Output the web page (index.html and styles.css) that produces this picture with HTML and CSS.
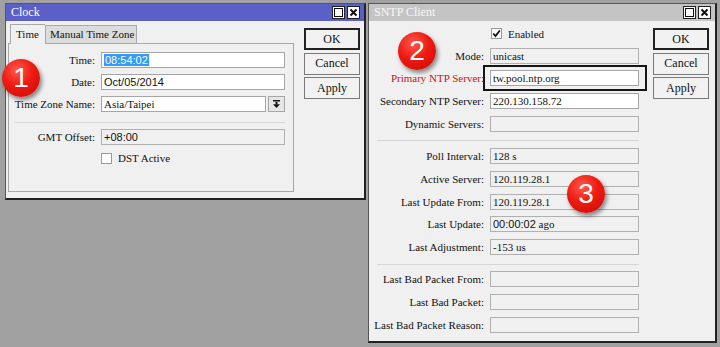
FILE: index.html
```html
<!DOCTYPE html>
<html>
<head>
<meta charset="utf-8">
<link rel="stylesheet" href="styles.css">
</head>
<body>
<div class="desk">
  <div class="win clock">
    <div class="title active">
      <span>Clock</span>
      <div class="tbtns">
        <span class="tb"><svg width="9" height="9" viewBox="0 0 9 9"><rect x="0.5" y="0.5" width="8" height="8" fill="none" stroke="#111"/></svg></span>
        <span class="tb"><svg width="9" height="9" viewBox="0 0 9 9"><path d="M1.5 1.5L7.5 7.5M7.5 1.5L1.5 7.5" stroke="#111" stroke-width="2"/></svg></span>
      </div>
    </div>
    <div class="wbody">
      <div class="tabs-area">
        <div class="tabstrip">
          <div class="tab on">Time</div>
          <div class="tab">Manual Time Zone</div>
        </div>
        <div class="panel">
          <div class="row"><label>Time:</label><div class="field sans"><span class="sel">08:54:02</span></div></div>
          <div class="row"><label>Date:</label><div class="field sans">Oct/05/2014</div></div>
          <div class="row"><label>Time Zone Name:</label><div class="field combo">Asia/Taipei</div><div class="dd"><svg width="7" height="8" viewBox="0 0 7 8"><rect x="0" y="0" width="7" height="1.5" fill="#111"/><rect x="2.5" y="2" width="2" height="2.5" fill="#111"/><path d="M0 4.3H7L3.5 8Z" fill="#111"/></svg></div></div>
          <div class="sep csep"></div>
          <div class="row"><label>GMT Offset:</label><div class="field ro sans">+08:00</div></div>
          <div class="row chkrow"><span class="cb"></span><span class="cbl">DST Active</span></div>
        </div>
      </div>
      <div class="btns">
        <div class="btn def">OK</div>
        <div class="btn">Cancel</div>
        <div class="btn">Apply</div>
      </div>
    </div>
  </div>

  <div class="win sntp">
    <div class="title inactive">
      <span>SNTP Client</span>
      <div class="tbtns">
        <span class="tb"><svg width="9" height="9" viewBox="0 0 9 9"><rect x="0.5" y="0.5" width="8" height="8" fill="none" stroke="#111"/></svg></span>
        <span class="tb"><svg width="9" height="9" viewBox="0 0 9 9"><path d="M1.5 1.5L7.5 7.5M7.5 1.5L1.5 7.5" stroke="#111" stroke-width="2"/></svg></span>
      </div>
    </div>
    <div class="wbody sbody">
      <div class="sform">
        <div class="row en"><label></label><span class="cb"><svg width="9" height="9" viewBox="0 0 9 9"><path d="M1.2 4.5L3.5 7L7.8 1.5" fill="none" stroke="#111" stroke-width="1.8"/></svg></span><span class="cbl">Enabled</span></div>
        <div class="row"><label>Mode:</label><div class="field ro">unicast</div></div>
        <div class="row"><label class="red">Primary NTP Server:</label><div class="field">tw.pool.ntp.org</div></div>
        <div class="row"><label>Secondary NTP Server:</label><div class="field">220.130.158.72</div></div>
        <div class="row"><label>Dynamic Servers:</label><div class="field ro"></div></div>
        <div class="sep ssep"></div>
        <div class="row"><label>Poll Interval:</label><div class="field ro">128 s</div></div>
        <div class="row"><label>Active Server:</label><div class="field ro">120.119.28.1</div></div>
        <div class="row"><label>Last Update From:</label><div class="field ro">120.119.28.1</div></div>
        <div class="row"><label>Last Update:</label><div class="field ro"><span class="sans">00:00:02</span>&nbsp;ago</div></div>
        <div class="row"><label>Last Adjustment:</label><div class="field ro">-153 us</div></div>
        <div class="sep ssep"></div>
        <div class="row"><label>Last Bad Packet From:</label><div class="field ro"></div></div>
        <div class="row"><label>Last Bad Packet:</label><div class="field ro"></div></div>
        <div class="row"><label>Last Bad Packet Reason:</label><div class="field ro"></div></div>
      </div>
      <div class="btns">
        <div class="btn def">OK</div>
        <div class="btn">Cancel</div>
        <div class="btn">Apply</div>
      </div>
    </div>
  </div>
</div>

<div class="hilite"></div>
<div class="badge b1">1</div>
<div class="badge b2">2</div>
<div class="badge b3">3</div>
</body>
</html>
```

FILE: styles.css
```css
* { box-sizing: border-box; }
html, body { margin: 0; height: 100%; }
body {
  background: #a1a1a1;
  font-family: "Liberation Serif", "Times New Roman", serif;
  font-size: 11px;
  color: #111;
  position: relative;
  overflow: hidden;
}
.desk { display: flex; gap: 2px; padding: 3px 0 0 5px; align-items: flex-start; }
.win {
  background: #f0f0f0;
  border: 1px solid #555;
  border-right: 2px solid #222;
  border-bottom: 2px solid #222;
  display: flex;
  flex-direction: column;
}
.clock { width: 361px; height: 197px; }
.sntp { width: 349px; height: 340px; }

.title {
  height: 17px;
  flex: none;
  display: flex;
  align-items: center;
  justify-content: space-between;
  padding: 0 4px 0 5px;
  font-size: 12px;
}
.title.active { background: #5b5fc8; color: #fff; }
.title.inactive { background: #c4c4c4; color: #f7f7f7; }
.tbtns { display: flex; gap: 2px; }
.tb {
  width: 13px; height: 13px;
  background: #fff;
  border: 1px solid #222;
  display: flex; align-items: center; justify-content: center;
}

.wbody { display: flex; padding: 3px 0 0 2px; }
.tabs-area { width: 286px; display: flex; flex-direction: column; }
.tabstrip { height: 19px; display: flex; align-items: flex-end; padding-left: 2px; }
.tab {
  height: 18px;
  border: 1px solid #a8a8a8;
  border-bottom: none;
  background: #dcdcdc;
  padding: 2px 4px 0 4px;
  white-space: nowrap;
}
.tab.on {
  height: 20px;
  width: 35px;
  background: #f0f0f0;
  position: relative;
  margin-bottom: -1px;
  z-index: 1;
  padding: 3px 0 0 5px;
  border-right: none;
}
.tab.on + .tab { width: 92px; }
.panel {
  height: 149px;
  border: 1px solid #a8a8a8;
  padding: 8px 0 0 0;
  display: flex;
  flex-direction: column;
  gap: 6px;
}

.row { display: flex; align-items: center; height: 16px; flex: none; }
.row label { width: 86px; margin-right: 6px; text-align: right; white-space: nowrap; }
.field {
  width: 184px;
  height: 16px;
  border: 1px solid #a6a6a6;
  background: #fff;
  padding: 0 0 0 2px;
  line-height: 14px;
  white-space: nowrap;
  overflow: hidden;
}
.field.ro { background: #f0f0f0; border-color: #b0b0b0; }
.field.combo { width: 165px; }
.sans { font-family: "Liberation Sans", Arial, sans-serif; font-size: 11px; }
.sel { background: #3399ff; color: #fff; padding: 0 1px; }
.dd {
  width: 17px; height: 16px;
  margin-left: 2px;
  border: 1px solid #a6a6a6;
  background: #e6e6e6;
  display: flex; align-items: center; justify-content: center;
}
.sep { flex: none; border-bottom: 1px solid #d6d6d6; }
.csep { height: 5px; margin-left: 6px; width: 270px; }
.chkrow { height: 14px; padding-left: 92px; }
.cb {
  width: 11px; height: 11px;
  border: 1px solid #9a9a9a;
  background: #fff;
  display: inline-flex; align-items: center; justify-content: center;
  flex: none;
}
.cbl { margin-left: 6px; }

.btns { display: flex; flex-direction: column; gap: 2.5px; padding-top: 4px; margin-left: 10px; width: 56px; }
.btn {
  height: 22px;
  border: 1px solid #7a7a7a;
  background: #f2f2f2;
  display: flex; align-items: center; justify-content: center;
  font-size: 12px;
}
.btn.def { border: 2px solid #222; }

.sbody { padding: 0 0 0 3px; }
.sform { width: 267px; display: flex; flex-direction: column; gap: 6.7px; padding-top: 5px; }
.sform .row label { width: 112px; }
.sform .field { width: 149px; }
.row.en { height: 15px; }
.row.en .cb { margin-left: 1px; }
.ssep { height: 3px; margin-left: 5px; width: 262px; }
.sbody .btns { margin-left: 14px; padding-top: 7px; }
.red { color: #d01010; }

.hilite {
  position: absolute;
  left: 483px; top: 65px;
  width: 164px; height: 26px;
  border: 2px solid #151515;
}
.badge {
  position: absolute;
  width: 38px; height: 38px;
  border-radius: 50%;
  background: radial-gradient(circle at 40% 30%, #ff5a4a 0%, #ee1a12 45%, #c80806 100%);
  color: #fff;
  font-family: "Liberation Sans", Arial, sans-serif;
  font-size: 28px;
  line-height: 38px;
  text-align: center;
  box-shadow: 2px 3px 4px rgba(0,0,0,0.45);
}
.b1 { left: 2px; top: 59px; }
.b2 { left: 398px; top: 32px; }
.b3 { left: 567px; top: 175px; }
```
